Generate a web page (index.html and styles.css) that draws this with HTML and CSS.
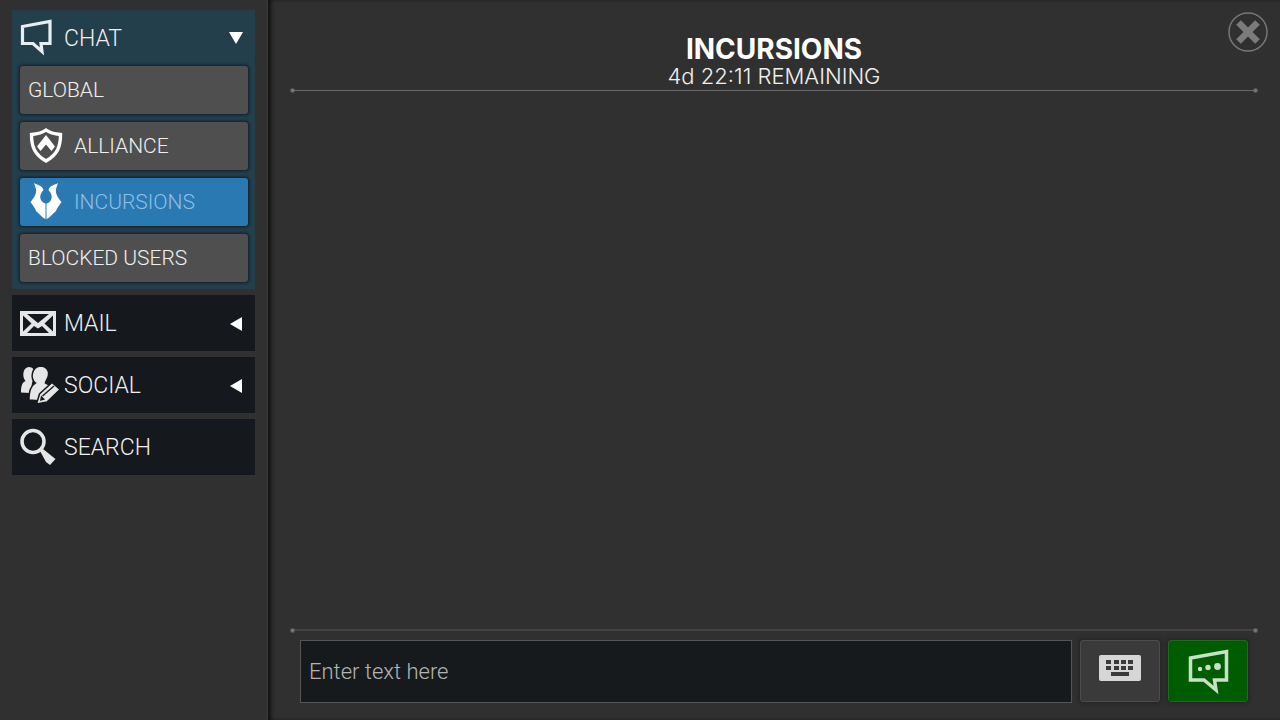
FILE: index.html
```html
<!DOCTYPE html>
<html lang="en">
<head>
    <meta charset="UTF-8">
    <meta name="viewport" content="width=device-width, initial-scale=1.0">
    <title>Incursions Chat</title>
    <link rel="stylesheet" href="styles.css">
</head>
<body>

<nav class="sidebar">
    <div class="group">
        <button type="button" class="section open" aria-expanded="true">
            <svg class="icon" viewBox="0 0 36 36" aria-hidden="true">
                <path d="M2.500 6.500L30 1.500V23.500H21L22 31.500L13 23.500H2.500Z" fill="none" stroke="#e6eef2" stroke-width="3.200"/>
            </svg>
            <span class="label">CHAT</span>
            <svg class="arrow" viewBox="0 0 14 14" aria-hidden="true"><path d="M0 1H14L7 13Z" fill="#fff"/></svg>
        </button>
        <div class="channels">
            <button type="button" class="channel">GLOBAL</button>
            <button type="button" class="channel">
                <svg class="badge" viewBox="0 0 36 36" aria-hidden="true">
                    <path d="M18 2C14 5 9 6 3.500 6.500C3.500 18 6 26 18 33C30 26 32.500 18 32.500 6.500C27 6 22 5 18 2Z" fill="none" stroke="#fff" stroke-width="3.400"/>
                    <path d="M18 7L27 18.500L23.500 23L18 16.500L12.500 23L9 18.500Z" fill="#fff"/>
                </svg>
                ALLIANCE
            </button>
            <button type="button" class="channel active">
                <svg class="badge" viewBox="0 0 36 36" aria-hidden="true">
                    <path d="M6 -1C9 1 14 1 15.500 6C12.500 9 11.500 13 13 16C14 18 15.500 19 17.500 19.500V35C14 34 12 30 8 27L7 24.500L2.500 18C6 14 9 9 8 5Z" fill="#fff"/>
                    <path d="M30 -1C27 1 22 1 20.500 6C23.500 9 24.500 13 23 16C22 18 20.500 19 18.500 19.500V35C22 34 24 30 28 27L29 24.500L33.500 18C30 14 27 9 28 5Z" fill="#fff"/>
                </svg>
                INCURSIONS
            </button>
            <button type="button" class="channel">BLOCKED USERS</button>
        </div>
    </div>

    <button type="button" class="section" aria-expanded="false">
        <svg class="icon" viewBox="0 0 36 36" aria-hidden="true">
            <path d="M0 6H36V31H0Z" fill="#e6e6e6"/>
            <path d="M7 9H29L18 18ZM3 10.500L11.500 18.500L3 26.500ZM33 10.500L24.500 18.500L33 26.500ZM7 28L14 21L18 23.500L22 21L29 28Z" fill="#15191e"/>
        </svg>
        <span class="label">MAIL</span>
        <svg class="arrow" viewBox="0 0 14 14" aria-hidden="true"><path d="M13 1V15L1 8Z" fill="#fff"/></svg>
    </button>

    <button type="button" class="section" aria-expanded="false">
        <svg class="icon" viewBox="0 0 36 36" aria-hidden="true">
            <path d="M8.500 0C13 0 15 3 14.500 7C14 10 12.500 11.500 12.500 14L10 26L1 25.500C1 19 2 15.500 5.500 14C2 10 2.500 1 8.500 0Z" fill="#e6e6e6"/>
            <path d="M20 -1C26 -1 29 3 28.500 8C28 12 25.500 13.500 25.500 16C28 17 30 18 31 20L22 34L9 33C9 23 11 19 15.500 16C9.500 11 12 0 20 -1Z" fill="#e6e6e6" stroke="#15191e" stroke-width="1.500"/>
            <path d="M16.500 37L19.500 27L32 15.500L40 22.500L27 35Z" fill="#e6e6e6" stroke="#15191e" stroke-width="1.500"/>
            <path d="M22.500 29L34 19" fill="none" stroke="#15191e" stroke-width="1.400"/>
            <path d="M21 28.500L25 32.500L20 34Z" fill="#15191e"/>
        </svg>
        <span class="label">SOCIAL</span>
        <svg class="arrow" viewBox="0 0 14 14" aria-hidden="true"><path d="M13 1V15L1 8Z" fill="#fff"/></svg>
    </button>

    <button type="button" class="section">
        <svg class="icon" viewBox="0 0 36 36" aria-hidden="true">
            <circle cx="13" cy="12.500" r="11" fill="none" stroke="#e6e6e6" stroke-width="3.500"/>
            <path d="M20 22L23 20L35.500 30L30 36L26 33Z" fill="#e6e6e6"/>
        </svg>
        <span class="label">SEARCH</span>
    </button>
</nav>

<main class="panel">
    <button type="button" class="close" aria-label="Close">
        <svg viewBox="0 0 40 40" aria-hidden="true">
            <circle cx="20" cy="20" r="19" fill="none" stroke="#777" stroke-width="1.500"/>
            <path d="M10.500 10.500L29.500 29.500M29.500 10.500L10.500 29.500" stroke="#7b7b7b" stroke-width="6.500"/>
        </svg>
    </button>

    <header class="heading">
        <h1>INCURSIONS</h1>
        <p>4d 22:11 REMAINING</p>
    </header>

    <section class="messages" aria-label="Messages"></section>

    <form class="composer">
        <input type="text" class="message" placeholder="Enter text here" aria-label="Message">
        <button type="button" class="tool" aria-label="Keyboard">
            <svg class="keyboard" viewBox="0 0 42 26" aria-hidden="true">
                <rect width="42" height="26" rx="2" fill="#d6d6d6"/>
                <path d="M7 5h5v4h-5zM15 5h5v4h-5zM22 5h5v4h-5zM29 5h5v4h-5zM7 11h5v4h-5zM15 11h5v4h-5zM22 11h5v4h-5zM29 11h5v4h-5zM12 17h18v4h-18z" fill="#3a3a3a"/>
            </svg>
        </button>
        <button type="submit" class="tool send" aria-label="Send">
            <svg class="bubble" viewBox="0 0 40 46" aria-hidden="true">
                <path d="M2.500 10L38.500 3.500V32H26.500L28 42L16 32H2.500Z" fill="none" stroke="#c6e2c6" stroke-width="3.500"/>
                <circle cx="12" cy="21" r="2.200" fill="#c6e2c6"/>
                <circle cx="20" cy="19.500" r="2.700" fill="#c6e2c6"/>
                <circle cx="29.500" cy="18.500" r="3.400" fill="#c6e2c6"/>
            </svg>
        </button>
    </form>
</main>

</body>
</html>
```
FILE: styles.css
```css
* {
    box-sizing: border-box;
}

body {
    font-family: Roboto, Arial, sans-serif;
    font-weight: 300;
    background-color: #303030;
    color: #f0f0f0;
    margin: 0;
    display: flex;
    min-height: 100vh;
}

button {
    font: inherit;
    color: inherit;
    border: none;
    cursor: pointer;
}

/* Left menu */
.sidebar {
    width: 268px;
    flex-shrink: 0;
    padding: 10px 12px;
    border-right: 1px solid #3a3a3a;
    display: flex;
    flex-direction: column;
    gap: 6px;
}

.group {
    background-color: #233f4c;
    padding-bottom: 7px;
}

.section {
    width: 100%;
    height: 56px;
    padding: 0 12px 0 8px;
    display: flex;
    align-items: center;
    gap: 8px;
    background-color: #15191e;
    font-size: 23px;
    text-align: left;
}

.section.open {
    background-color: transparent;
}

.icon {
    width: 36px;
    height: 36px;
    flex-shrink: 0;
    overflow: visible;
}

.label {
    flex: 1;
}

.arrow {
    width: 14px;
    height: 14px;
    overflow: visible;
}

.channels {
    display: flex;
    flex-direction: column;
    gap: 8px;
    padding: 0 7px 0 8px;
}

.channel {
    height: 48px;
    padding: 0 8px;
    display: flex;
    align-items: center;
    gap: 10px;
    background-color: #4f4f4f;
    border-radius: 3px;
    box-shadow: 0 0 3px 1px #101c22;
    font-size: 21px;
}

.channel.active {
    background-color: #2a79b3;
    color: #8fbfe4;
}

.badge {
    width: 36px;
    height: 36px;
    overflow: visible;
}

/* Chat area */
.panel {
    flex: 1;
    min-width: 0;
    position: relative;
    display: flex;
    flex-direction: column;
    padding: 35px 24px 17px;
    box-shadow: inset 4px 0 4px -1px #111;
}

.close {
    position: absolute;
    top: 12px;
    right: 12px;
    width: 40px;
    height: 40px;
    padding: 0;
    background: none;
}

.close svg {
    display: block;
}

.heading {
    font-family: Inter, Arial, sans-serif;
    text-align: center;
}

h1 {
    margin: 0;
    font-size: 28px;
    font-weight: 700;
    line-height: 28px;
    color: #fff;
}

.heading p {
    margin: 0;
    font-size: 22px;
    line-height: 27px;
}

/* Thin rules with a dot at each end */
.messages {
    flex: 1;
    border-top: 1px solid #686868;
    border-bottom: 2px solid #434343;
    position: relative;
}

.messages::before,
.messages::after {
    content: "";
    position: absolute;
    left: -2px;
    right: -2px;
    height: 5px;
    background:
        radial-gradient(circle, #777 1px, transparent 3px) left / 5px 5px no-repeat,
        radial-gradient(circle, #777 1px, transparent 3px) right / 5px 5px no-repeat;
}

.messages::before {
    top: -3px;
}

.messages::after {
    bottom: -4px;
}

.composer {
    display: flex;
    align-items: flex-start;
    gap: 8px;
    padding: 9px 8px 0;
}

.message {
    flex: 1;
    min-width: 0;
    height: 63px;
    padding: 0 8px;
    background-color: #161a1d;
    border: 1px solid #555;
    color: #f0f0f0;
    font: inherit;
    font-size: 22px;
}

.message::placeholder {
    color: #b4b4b4;
}

.tool {
    width: 80px;
    height: 62px;
    display: flex;
    align-items: center;
    justify-content: center;
    background-color: #3a3a3a;
    border: 1px solid #4c4c4c;
    border-radius: 3px;
    box-shadow: 0 0 4px 1px #222;
}

.send {
    background-color: #005c00;
    border-color: #1e6a1e;
}

.keyboard {
    width: 42px;
    margin-bottom: 6px;
}

.bubble {
    width: 40px;
    height: 46px;
    overflow: visible;
}
```
